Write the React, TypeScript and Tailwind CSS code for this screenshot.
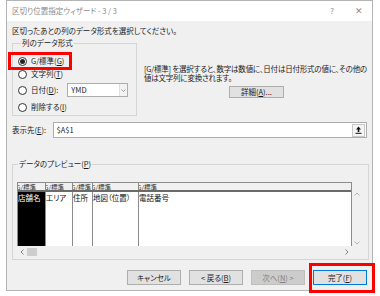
import React from "react";

const U = ({ c }: { c: string }) => <span className="underline">{c}</span>;

function Radio({ checked, children }: { checked?: boolean; children: React.ReactNode }) {
  return (
    <div className="flex items-center h-[12px] gap-[4px]">
      <span className="w-[9px] h-[9px] rounded-full border border-[#333] bg-white flex items-center justify-center">
        {checked && <span className="w-[5px] h-[5px] rounded-full bg-[#222]" />}
      </span>
      <span>{children}</span>
    </div>
  );
}

function Btn({ children, primary, disabled }: { children: React.ReactNode; primary?: boolean; disabled?: boolean }) {
  return (
    <div
      className={`w-[54px] h-[15px] flex items-center justify-center border ${
        primary
          ? "border-[#0078d7] bg-[#e1e1e1] text-[#222]"
          : disabled
          ? "border-[#bfbfbf] bg-[#cccccc] text-[#838383]"
          : "border-[#adadad] bg-[#e1e1e1] text-[#222]"
      }`}
    >
      {children}
    </div>
  );
}

const cols = [
  { w: "w-[28px]", body: "店舗名", dark: true },
  { w: "w-[27px]", body: "エリア" },
  { w: "w-[20px]", body: "住所" },
  { w: "w-[46px]", body: "地図（位置）" },
];

export default function App() {
  return (
    <div className="w-[380px] h-[296px] bg-white relative overflow-hidden text-[7.5px] leading-[10px] text-[#1a1a1a] font-['Noto_Sans_CJK_JP','Noto_Sans',sans-serif] [font-feature-settings:'palt']">
      {/* Dialog window */}
      <div className="ml-[6px] w-[367px] h-[291px] border border-[#b4b4b4] bg-[#f0f0f0] flex flex-col">
        {/* Title bar */}
        <div className="h-[20px] bg-white flex items-center pl-[5px] pr-[8px] text-[#8a8a8a]">
          <span className="flex-1">区切り位置指定ウィザード - 3 / 3</span>
          <span className="w-[10px] text-center">?</span>
          <span className="w-[10px] ml-[17px] text-center text-[9px]">✕</span>
        </div>

        <div className="flex-1 px-[5px] flex flex-col">
          <div className="mt-[5px] h-[10px]">区切ったあとの列のデータ形式を選択してください。</div>

          <div className="mt-[2px] flex">
            <fieldset className="w-[127px] h-[78px] border border-[#d5d5d5] pl-[5px]">
              <legend className="ml-[3px] px-[1px] h-[10px]">列のデータ形式</legend>
              <div className="mt-[7px] flex flex-col">
                <Radio checked>
                  G/標準(<U c="G" />)
                </Radio>
                <div className="mt-[1px]">
                  <Radio>
                    文字列(<U c="T" />)
                  </Radio>
                </div>
                <div className="mt-[3px] flex items-center h-[14px]">
                  <Radio>
                    日付(<U c="D" />):
                  </Radio>
                  <div className="ml-[9px] w-[61px] h-[14px] bg-white border border-[#adadad] flex items-center">
                    <span className="flex-1 pl-[3px]">YMD</span>
                    <span className="w-[8px] h-full bg-[#f3f3f3] border-l border-[#e0e0e0] flex items-center justify-center">
                      <svg width="5" height="3" viewBox="0 0 5 3">
                        <path d="M0.5 0.5 L2.5 2.5 L4.5 0.5" stroke="#888" strokeWidth="0.8" fill="none" />
                      </svg>
                    </span>
                  </div>
                </div>
                <div className="mt-[4px]">
                  <Radio>
                    削除する(<U c="I" />)
                  </Radio>
                </div>
              </div>
            </fieldset>

            <div className="ml-[7px] flex-1 flex flex-col">
              <div className="mt-[26px] leading-[9px] whitespace-nowrap tracking-[-0.2px]">
                [G/標準] を選択すると、数字は数値に、日付は日付形式の値に、その他の
                <br />
                値は文字列に変換されます。
              </div>
              <div className="mt-[4px] ml-[85px] w-[55px] h-[12px] border border-[#adadad] bg-[#e1e1e1] flex items-center justify-center">
                詳細(<U c="A" />)...
              </div>
            </div>
          </div>

          {/* Destination row */}
          <div className="mt-[6px] flex items-center h-[16px]">
            <span className="w-[41px]">
              表示先(<U c="E" />):
            </span>
            <div className="w-[318px] h-[16px] bg-white border border-[#adadad] flex items-center">
              <span className="flex-1 pl-[3px]">$A$1</span>
              <span className="w-[13px] h-[13px] mr-[1px] border border-[#c8c8c8] bg-[#f5f5f5] flex items-center justify-center">
                <svg width="7" height="8" viewBox="0 0 7 8">
                  <path d="M3.5 0.5 L6 3.5 L4.3 3.5 L4.3 6 L2.7 6 L2.7 3.5 L1 3.5 Z" fill="#111" />
                  <rect x="0.5" y="6.8" width="6" height="1" fill="#111" />
                </svg>
              </span>
            </div>
          </div>

          {/* Preview */}
          <fieldset className="mt-[21px] w-[357px] h-[101px] border border-[#d5d5d5] pl-[4px]">
            <legend className="ml-[1px] px-[1px] h-[10px]">
              データのプレビュー(<U c="P" />)
            </legend>
            <div className="mt-[13px] flex flex-col w-[345px]">
              <div className="flex">
                <div className="w-[335px] h-[64px] bg-white border-l border-t border-r border-[#8c8c8c] flex flex-col">
                  <div className="flex h-[9px] bg-[#f0f0f0] border-b-2 border-[#6a6a6a] text-[6.5px] leading-[8px] text-[#333]">
                    {cols.map((c, i) => (
                      <div key={i} className={`${c.w} border-r border-[#8c8c8c] overflow-hidden whitespace-nowrap`}>
                        <span className="ml-[-2px]">G/標準</span>
                      </div>
                    ))}
                    <div className="flex-1 overflow-hidden whitespace-nowrap">
                      <span className="ml-[-2px]">G/標準</span>
                    </div>
                  </div>
                  <div className="flex flex-1">
                    {cols.map((c, i) => (
                      <div
                        key={i}
                        className={`${c.w} border-r border-[#8c8c8c] whitespace-nowrap overflow-hidden pt-[1px] ${
                          c.dark ? "bg-black text-white" : "bg-white text-[#111]"
                        }`}
                      >
                        {c.body}
                      </div>
                    ))}
                    <div className="flex-1 pt-[1px] text-[#111]">電話番号</div>
                  </div>
                </div>
                <div className="w-[10px] h-[64px] flex flex-col items-center justify-between pt-[10px] pb-[1px]">
                  <svg width="6" height="4" viewBox="0 0 6 4">
                    <path d="M0.5 3.5 L3 1 L5.5 3.5" stroke="#a6a6a6" strokeWidth="0.8" fill="none" />
                  </svg>
                  <svg width="6" height="4" viewBox="0 0 6 4">
                    <path d="M0.5 0.5 L3 3 L5.5 0.5" stroke="#a6a6a6" strokeWidth="0.8" fill="none" />
                  </svg>
                </div>
              </div>
              <div className="w-[335px] h-[11px] flex items-center">
                <span className="w-[10px] flex justify-center">
                  <svg width="4" height="6" viewBox="0 0 4 6">
                    <path d="M3.5 0.5 L1 3 L3.5 5.5" stroke="#606060" strokeWidth="0.8" fill="none" />
                  </svg>
                </span>
                <span className="w-[10px] h-[8px] bg-[#cdcdcd]" />
                <span className="flex-1" />
                <span className="w-[10px] flex justify-center">
                  <svg width="4" height="6" viewBox="0 0 4 6">
                    <path d="M0.5 0.5 L3 3 L0.5 5.5" stroke="#606060" strokeWidth="0.8" fill="none" />
                  </svg>
                </span>
              </div>
            </div>
          </fieldset>

          {/* Buttons */}
          <div className="mt-[10px] flex justify-end gap-[8px]">
            <Btn>キャンセル</Btn>
            <Btn>
              &lt; 戻る(<U c="B" />)
            </Btn>
            <Btn disabled>
              次へ(<U c="N" />) &gt;
            </Btn>
            <Btn primary>
              完了(<U c="F" />)
            </Btn>
          </div>
        </div>
      </div>

      {/* Red highlight overlays */}
      <div className="absolute left-[8px] top-[52px] w-[64px] h-[18px] border-[3px] border-[#ff0000] pointer-events-none" />
      <div className="absolute left-[309px] top-[263px] w-[66px] h-[30px] border-[3px] border-[#ff0000] pointer-events-none" />
    </div>
  );
}
